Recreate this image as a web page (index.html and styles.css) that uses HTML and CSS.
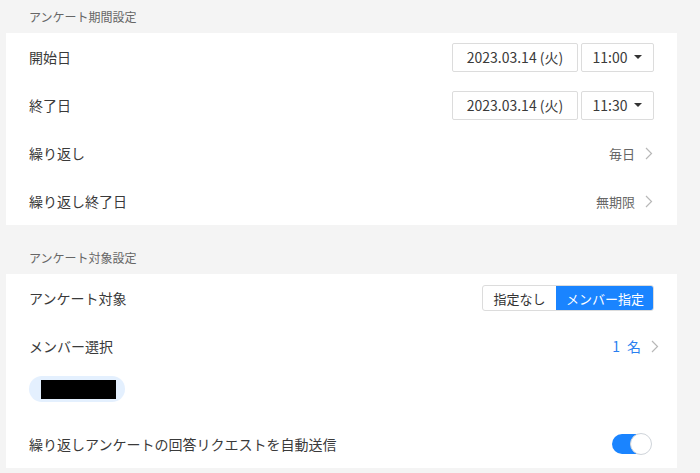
FILE: index.html
```html
<!DOCTYPE html>
<html lang="ja">
<head>
<meta charset="utf-8">
<link rel="stylesheet" href="styles.css">
</head>
<body>
<div class="page">
  <div class="section-title first">アンケート期間設定</div>
  <div class="card">
    <div class="row">
      <span class="label">開始日</span>
      <div class="controls">
        <div class="box date">2023.03.14 (火)</div>
        <div class="box time">11:00<span class="caret"></span></div>
      </div>
    </div>
    <div class="row">
      <span class="label">終了日</span>
      <div class="controls">
        <div class="box date">2023.03.14 (火)</div>
        <div class="box time">11:30<span class="caret"></span></div>
      </div>
    </div>
    <div class="row">
      <span class="label">繰り返し</span>
      <div class="value">毎日<svg class="chev" width="8" height="13" viewBox="0 0 8 13"><path d="M1 1l5.5 5.5L1 12" fill="none" stroke="#b8b8b8" stroke-width="1.2"/></svg></div>
    </div>
    <div class="row">
      <span class="label">繰り返し終了日</span>
      <div class="value">無期限<svg class="chev" width="8" height="13" viewBox="0 0 8 13"><path d="M1 1l5.5 5.5L1 12" fill="none" stroke="#b8b8b8" stroke-width="1.2"/></svg></div>
    </div>
  </div>

  <div class="section-title">アンケート対象設定</div>
  <div class="card">
    <div class="row">
      <span class="label">アンケート対象</span>
      <div class="segment">
        <span class="seg">指定なし</span>
        <span class="seg active">メンバー指定</span>
      </div>
    </div>
    <div class="row">
      <span class="label">メンバー選択</span>
      <div class="value blue"><span class="count">1<span class="unit">名</span></span><svg class="chev" width="8" height="13" viewBox="0 0 8 13"><path d="M1 1l5.5 5.5L1 12" fill="none" stroke="#b8b8b8" stroke-width="1.2"/></svg></div>
    </div>
    <div class="chip-row">
      <span class="chip"><span class="redact"></span></span>
    </div>
    <div class="row">
      <span class="label">繰り返しアンケートの回答リクエストを自動送信</span>
      <span class="toggle"><span class="knob"></span></span>
    </div>
  </div>
</div>
</body>
</html>
```

FILE: styles.css
```css
* { box-sizing: border-box; }
html, body {
  margin: 0;
  padding: 0;
  background: #f4f4f4;
  font-family: "Noto Sans CJK JP", "Noto Sans", sans-serif;
  color: #333;
}
.page {
  width: 671px;
  margin-left: 6px;
}
.section-title {
  height: 33px;
  display: flex;
  align-items: center;
  padding-left: 23px;
  font-size: 12px;
  color: #666;
  margin-top: 16px;
}
.section-title.first { margin-top: 0; }
.card {
  background: #fff;
  padding: 0 23px;
}
.row {
  height: 48px;
  display: flex;
  align-items: center;
  justify-content: space-between;
}
.label {
  font-size: 14px;
  color: #3a3a3a;
}
.controls {
  display: flex;
  gap: 3px;
}
.box {
  height: 29px;
  border: 1px solid #dcdcdc;
  border-radius: 2px;
  display: flex;
  align-items: center;
  justify-content: center;
  font-size: 14px;
  color: #3a3a3a;
}
.box.date { width: 126px; }
.box.time { width: 73px; gap: 7px; }
.caret {
  width: 0;
  height: 0;
  border-left: 4px solid transparent;
  border-right: 4px solid transparent;
  border-top: 4px solid #333;
}
.value {
  display: flex;
  align-items: center;
  gap: 10px;
  font-size: 13px;
  color: #666;
  margin-right: 1px;
}
.value.blue {
  color: #2a7ff0;
  font-size: 14px;
  margin-right: -5px;
}
.unit { margin-left: 7px; }
.chev { display: block; }
.segment {
  display: flex;
  height: 26px;
  border-radius: 3px;
  overflow: hidden;
  border: 1px solid #dcdcdc;
}
.seg {
  display: flex;
  align-items: center;
  justify-content: center;
  font-size: 13px;
  color: #333;
}
.seg:first-child { width: 73px; }
.seg.active {
  width: 98px;
  background: #1a84ff;
  color: #fff;
  margin: -1px -1px -1px 0;
  height: 26px;
}
.chip-row {
  padding: 6px 0 18px;
  display: flex;
}
.chip {
  width: 96px;
  height: 26px;
  border-radius: 13px;
  background: #e4f0fe;
  display: flex;
  align-items: center;
  justify-content: center;
}
.redact {
  width: 75px;
  height: 19px;
  background: #000;
  margin-left: 2px;
}
.toggle {
  position: relative;
  width: 40px;
  height: 22px;
  display: block;
  margin-right: 2px;
}
.toggle::before {
  content: "";
  position: absolute;
  left: 0;
  top: 1px;
  width: 38px;
  height: 20px;
  border-radius: 10px;
  background: #1a84ff;
}
.knob {
  position: absolute;
  right: 0;
  top: 0;
  width: 22px;
  height: 22px;
  border-radius: 50%;
  background: #fff;
  border: 1px solid #cfd4da;
}
```
